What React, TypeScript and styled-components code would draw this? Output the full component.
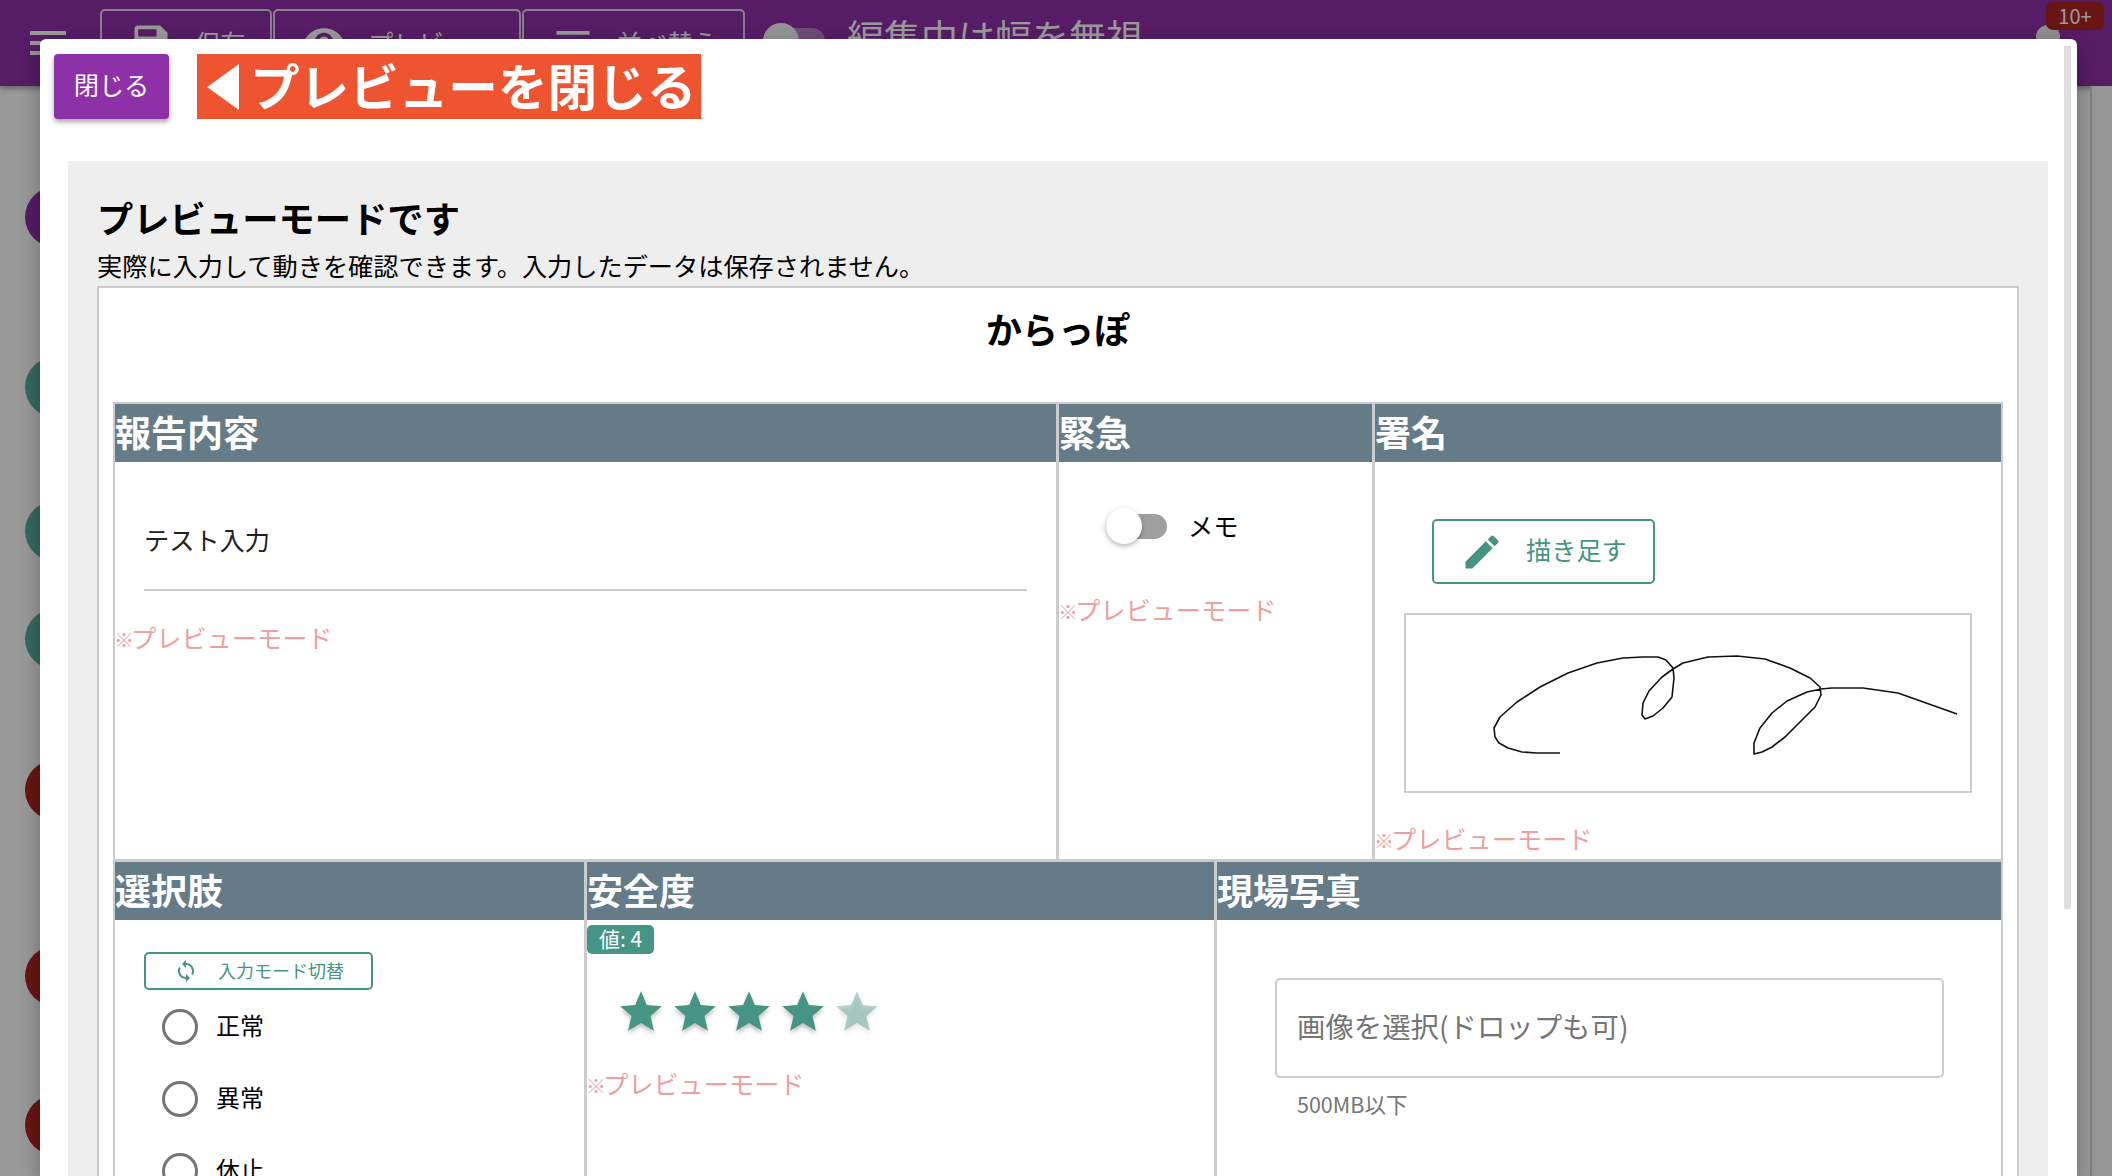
import React, { ReactElement } from 'react'
import styled, { createGlobalStyle } from 'styled-components'
import { MdEdit, MdMenu, MdSave, MdSort, MdStar, MdSync, MdVisibility } from 'react-icons/md'

const teal = '#459484'
const line = '#cccccc'

const GlobalStyle = createGlobalStyle`
  html, body { margin: 0; padding: 0; height: 100%; overflow: hidden; background: #fff; }
  body { font-family: "Noto Sans CJK JP", "Noto Sans", sans-serif; font-size: 25.2px; color: #000; }
  * { box-sizing: border-box; }
`

const Page = styled.div`
  position: relative;
  width: 2112px;
  height: 1176px;
  overflow: hidden;
`

const AppBar = styled.header`
  display: flex;
  align-items: flex-start;
  height: 86px;
  background: #8f2fa9;
  color: #fff;
  padding: 9px 0 0 30px;
  box-shadow: 0 2px 6px rgba(0, 0, 0, 0.4);
`

const MenuIcon = styled.div`
  width: 75px;
  margin: 10px 0 0 -5px;
  line-height: 0;
  svg { margin-left: -1px; }
`

const BarButton = styled.div<{ $w: number }>`
  display: flex;
  align-items: center;
  gap: 22px;
  width: ${p => p.$w}px;
  height: 66px;
  padding-left: 27px;
  border: 2px solid #e4d2ea;
  border-radius: 5px;
  font-size: 25.2px;
  margin-right: 1px;
`

const BarSwitch = styled.div`
  position: relative;
  width: 62px;
  height: 26px;
  margin: 19px 22px 0 17px;
  border-radius: 13px;
  background: #b77ec9;
`

const BarThumb = styled.span`
  position: absolute;
  left: 0;
  top: -5px;
  width: 36px;
  height: 36px;
  border-radius: 50%;
  background: #f5f5f5;
`

const BarText = styled.div`
  font-size: 37px;
  line-height: 54px;
`

const BarRight = styled.div`
  position: relative;
  margin-left: auto;
  width: 76px;
`

const Avatar = styled.div`
  width: 24px;
  height: 24px;
  margin-top: 16px;
  border-radius: 50%;
  background: #eeeeee;
`

const CountBadge = styled.span`
  position: absolute;
  left: 10px;
  top: -7px;
  width: 58px;
  height: 28px;
  border-radius: 7px;
  background: #b02320;
  font-size: 20px;
  line-height: 28px;
  text-align: center;
`

const Main = styled.main`
  display: flex;
  justify-content: space-between;
  height: 1090px;
`

const SideList = styled.div`
  padding-left: 25px;
`

const SideDot = styled.div<{ $color: string; $gap: number }>`
  width: 60px;
  height: 60px;
  margin-top: ${p => p.$gap}px;
  border-radius: 50%;
  background: ${p => p.$color};
`

const EdgeColumn = styled.div`
  width: 22px;
  background: #fafafa;
  border-left: 2px solid #d6d6d6;
`

const Overlay = styled.div`
  position: absolute;
  inset: 0;
  background: rgba(0, 0, 0, 0.4);
`

const Modal = styled.section`
  position: absolute;
  left: 40px;
  top: 39px;
  width: 2037px;
  height: 1137px;
  overflow: hidden;
  background: #fff;
  border-radius: 6px 6px 0 0;
  box-shadow: 0 8px 20px rgba(0, 0, 0, 0.3);
`

const ScrollThumb = styled.div`
  position: absolute;
  left: 2024px;
  top: 7px;
  width: 7px;
  height: 863px;
  background: #dddddd;
`

const ModalTop = styled.div`
  display: flex;
  align-items: flex-start;
  gap: 28px;
  height: 122px;
  padding: 15px 0 0 14px;
`

const CloseButton = styled.button`
  width: 115px;
  height: 65px;
  border: 0;
  padding: 0 0 5px;
  border-radius: 4px;
  background: #8e30a8;
  color: #fff;
  font: inherit;
  font-size: 25.2px;
  box-shadow: 0 3px 5px rgba(0, 0, 0, 0.35);
`

const CloseBanner = styled.div`
  display: flex;
  align-items: center;
  width: 504px;
  height: 65px;
  padding: 0 0 5px 10px;
  background: #ee5430;
  color: #fff;
  font-size: 49.6px;
  font-weight: 700;
  line-height: 60px;
  white-space: nowrap;
`

const BannerArrow = styled.svg`
  flex: none;
  width: 32px;
  height: 46px;
  margin: 5px 11px 0 0;
`

const Panel = styled.div`
  width: 1980px;
  margin-left: 28px;
  height: 1100px;
  padding: 30px 29px 0 29px;
  background: #eeeeee;
`

const PanelTitle = styled.h2`
  margin: -1px 0 1px;
  font-size: 36.3px;
  font-weight: 700;
  line-height: 54px;
`

const PanelText = styled.p`
  margin: 0;
  font-size: 25.2px;
  line-height: 41px;
`

const FormSheet = styled.div`
  height: 1000px;
  padding: 0 14px;
  background: #fff;
  border: 2px solid ${line};
`

const FormTitle = styled.h1`
  margin: 0;
  height: 114px;
  padding-top: 13px;
  font-size: 36px;
  font-weight: 700;
  line-height: 54px;
  text-align: center;
`

const FormTable = styled.div`
  border: solid ${line};
  border-width: 2px 2px 0 2px;
`

const Row = styled.div<{ $cols: string; $h: number }>`
  display: grid;
  grid-template-columns: ${p => p.$cols};
  height: ${p => p.$h}px;
  border-bottom: 3px solid ${line};
`

const Cell = styled.div`
  border-left: 3px solid ${line};
  &:first-child { border-left: 0; }
`

const CellHead = styled.div`
  height: 58px;
  background: #667b88;
  color: #fff;
  font-size: 36px;
  font-weight: 700;
  line-height: 55px;
  white-space: nowrap;
`

const Note = styled.div<{ $top: number }>`
  display: flex;
  align-items: baseline;
  margin-top: ${p => p.$top}px;
  color: #ee9f9f;
  font-size: 25.2px;
  line-height: 36px;
`

const NoteMark = styled.span`
  width: 16px;
  font-size: 20px;
  margin-left: -1px;
  margin-right: 1px;
`

const TextField = styled.div`
  height: 76px;
  margin: 53px 29px 0 29px;
  padding-top: 6px;
  border-bottom: 2px solid ${line};
  color: #222;
  font-size: 25.2px;
  line-height: 36px;
`

const SwitchRow = styled.div`
  display: flex;
  align-items: center;
  gap: 21px;
  height: 40px;
  margin: 44px 0 0 47px;
`

const SwitchLabel = styled.span`
  margin-bottom: 3px;
`

const SwitchTrack = styled.span`
  position: relative;
  width: 61px;
  height: 25px;
  border-radius: 13px;
  background: #a0a0a0;
`

const SwitchThumb = styled.span`
  position: absolute;
  left: 0;
  top: -6px;
  width: 36px;
  height: 36px;
  border-radius: 50%;
  background: #fff;
  box-shadow: 0 2px 5px rgba(0, 0, 0, 0.3);
`

const OutlineButton = styled.button<{ $w: number; $h: number; $size: number; $gap: number; $pad: number }>`
  display: flex;
  align-items: center;
  gap: ${p => p.$gap}px;
  width: ${p => p.$w}px;
  height: ${p => p.$h}px;
  padding: 0 0 0 ${p => p.$pad}px;
  background: #fff;
  border: 2px solid ${teal};
  border-radius: 5px;
  color: ${teal};
  font: inherit;
  font-size: ${p => p.$size}px;
  white-space: nowrap;
`

const ButtonLabel = styled.span<{ $lift: number }>`
  margin-bottom: ${p => p.$lift}px;
`

const SignatureTop = styled.div`
  padding: 57px 0 0 57px;
`

const SignatureBox = styled.div`
  width: 568px;
  height: 180px;
  margin: 29px 0 0 29px;
  border: 2px solid ${line};
  line-height: 0;
`

const ChoiceTop = styled.div`
  padding: 32px 0 0 29px;
`

const RadioList = styled.div`
  padding: 19px 0 0 18px;
`

const RadioRow = styled.div`
  display: flex;
  align-items: center;
  gap: 18px;
  height: 36px;
  margin-bottom: 36px;
  font-size: 24px;
`

const RadioLabel = styled.span`
  margin-bottom: 5px;
`

const RadioDot = styled.span`
  width: 36px;
  height: 36px;
  border: 3px solid #757575;
  border-radius: 50%;
`

const ValueBadge = styled.span`
  display: block;
  width: 67px;
  height: 29px;
  margin: 5px 0 0 0;
  padding-bottom: 2px;
  border-radius: 5px;
  background: ${teal};
  color: #fff;
  font-size: 21px;
  line-height: 27px;
  text-align: center;
`

const Stars = styled.div`
  display: flex;
  gap: 4px;
  margin: 33px 0 0 29px;
  height: 50px;
  color: ${teal};
  filter: drop-shadow(0 3px 2px rgba(0, 0, 0, 0.25));
`

const Star = styled.span<{ $off?: boolean }>`
  width: 50px;
  height: 50px;
  opacity: ${p => (p.$off ? 0.4 : 1)};
`

const FileBox = styled.div`
  display: flex;
  align-items: center;
  height: 100px;
  margin: 58px 57px 0 58px;
  padding: 0 0 5px 20px;
  border: 2px solid ${line};
  border-radius: 5px;
  color: #757575;
  font-size: 28.4px;
`

const FileHint = styled.div`
  margin: 11px 0 0 80px;
  color: #757575;
  font-size: 21.5px;
  line-height: 30px;
`

const sideDots = [
  { color: '#8f2fa9', gap: 101 },
  { color: '#5aaf9f', gap: 110 },
  { color: '#5aaf9f', gap: 84 },
  { color: '#5aaf9f', gap: 48 },
  { color: '#b02320', gap: 91 },
  { color: '#b02320', gap: 126 },
  { color: '#b02320', gap: 89 },
]

// page coordinates of the pen stroke, the box below uses them as its viewBox
const signature =
  '1560,753 1537,753 1522,752 1508,748 1499,743 1495,737 1494,728 1500,717 1517,702 1540,687 1568,673 1597,663 1623,658 1643,657 1658,657 1666,660 1673,668 1674,678 1672,697 1663,708 1653,716 1645,719 1642,715 1643,703 1649,691 1662,677 1673,669 1683,663 1708,657 1737,656 1765,659 1790,668 1810,678 1820,687 1821,695 1815,707 1800,722 1785,737 1772,747 1762,752 1754,754 1754,743 1760,728 1772,713 1787,701 1807,692 1821,689 1832,688 1863,688 1898,693 1957,714'

function PreviewNote({ top }: { top: number }): ReactElement {
  return (
    <Note $top={top}>
      <NoteMark>※</NoteMark>プレビューモード
    </Note>
  )
}

export default function App(): ReactElement {
  return (
    <Page>
      <GlobalStyle />
      <AppBar>
        <MenuIcon><MdMenu size={48} /></MenuIcon>
        <BarButton $w={172}><MdSave size={44} />保存</BarButton>
        <BarButton $w={248}><MdVisibility size={44} />プレビュー</BarButton>
        <BarButton $w={223}><MdSort size={44} />並べ替え</BarButton>
        <BarSwitch><BarThumb /></BarSwitch>
        <BarText>編集中は幅を無視</BarText>
        <BarRight>
          <Avatar />
          <CountBadge>10+</CountBadge>
        </BarRight>
      </AppBar>
      <Main>
        <SideList>
          {sideDots.map((d, i) => (
            <SideDot key={i} $color={d.color} $gap={d.gap} />
          ))}
        </SideList>
        <EdgeColumn />
      </Main>
      <Overlay />
      <Modal>
        <ModalTop>
          <CloseButton>閉じる</CloseButton>
          <CloseBanner>
            <BannerArrow viewBox="0 0 32 46"><polygon points="32,0 32,46 0,23" fill="#fff" /></BannerArrow>
            プレビューを閉じる
          </CloseBanner>
        </ModalTop>
        <Panel>
          <PanelTitle>プレビューモードです</PanelTitle>
          <PanelText>実際に入力して動きを確認できます。入力したデータは保存されません。</PanelText>
          <FormSheet>
            <FormTitle>からっぽ</FormTitle>
            <FormTable>
              <Row $cols="941px 316px 1fr" $h={458}>
                <Cell>
                  <CellHead>報告内容</CellHead>
                  <TextField>テスト入力</TextField>
                  <PreviewNote top={28} />
                </Cell>
                <Cell>
                  <CellHead>緊急</CellHead>
                  <SwitchRow>
                    <SwitchTrack><SwitchThumb /></SwitchTrack>
                    <SwitchLabel>メモ</SwitchLabel>
                  </SwitchRow>
                  <PreviewNote top={45} />
                </Cell>
                <Cell>
                  <CellHead>署名</CellHead>
                  <SignatureTop>
                    <OutlineButton $w={223} $h={65} $size={25.2} $gap={22} $pad={26}>
                      <MdEdit size={44} /><ButtonLabel $lift={5}>描き足す</ButtonLabel>
                    </OutlineButton>
                  </SignatureTop>
                  <SignatureBox>
                    <svg width="564" height="176" viewBox="1406 615 564 176">
                      <polyline points={signature} fill="none" stroke="#111" strokeWidth="1.6" strokeLinejoin="round" />
                    </svg>
                  </SignatureBox>
                  <PreviewNote top={27} />
                </Cell>
              </Row>
              <Row $cols="469px 630px 1fr" $h={400}>
                <Cell>
                  <CellHead>選択肢</CellHead>
                  <ChoiceTop>
                    <OutlineButton $w={229} $h={38} $size={18} $gap={20} $pad={28}>
                      <MdSync size={24} /><ButtonLabel $lift={2}>入力モード切替</ButtonLabel>
                    </OutlineButton>
                    <RadioList>
                      <RadioRow><RadioDot /><RadioLabel>正常</RadioLabel></RadioRow>
                      <RadioRow><RadioDot /><RadioLabel>異常</RadioLabel></RadioRow>
                      <RadioRow><RadioDot /><RadioLabel>休止</RadioLabel></RadioRow>
                    </RadioList>
                  </ChoiceTop>
                </Cell>
                <Cell>
                  <CellHead>安全度</CellHead>
                  <ValueBadge>値: 4</ValueBadge>
                  <Stars>
                    {[1, 2, 3, 4, 5].map(n => (
                      <Star key={n} $off={n > 4}><MdStar size={50} /></Star>
                    ))}
                  </Stars>
                  <PreviewNote top={28} />
                </Cell>
                <Cell>
                  <CellHead>現場写真</CellHead>
                  <FileBox>画像を選択(ドロップも可)</FileBox>
                  <FileHint>500MB以下</FileHint>
                </Cell>
              </Row>
            </FormTable>
          </FormSheet>
        </Panel>
        <ScrollThumb />
      </Modal>
    </Page>
  )
}
